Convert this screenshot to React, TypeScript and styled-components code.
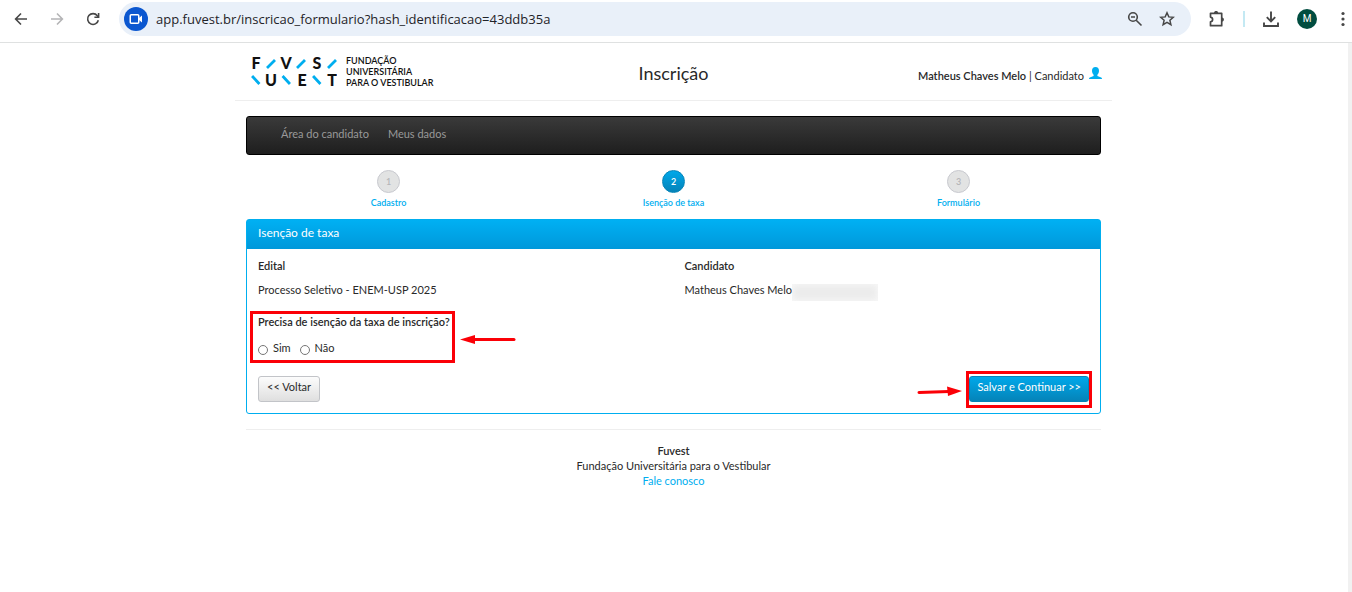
import React from "react";
import styled, { createGlobalStyle, css } from "styled-components";

const GlobalStyle = createGlobalStyle`
  *, *::before, *::after { box-sizing: border-box; }
  html, body { margin: 0; background: #fff; }
  body {
    font-family: Lato, "Liberation Sans", sans-serif;
    font-size: 11px;
    line-height: 16px;
    color: #292929;
  }
  button, input { font: inherit; color: inherit; }
  strong { font-weight: 600; }
`;

const Screen = styled.div`
  display: flex;
  flex-direction: column;
  min-height: 100vh;
`;

/* Browser bar */

const BrowserBar = styled.div`
  display: flex;
  align-items: center;
  height: 43px;
  padding: 0 0 4px 8px;
  border-bottom: 1px solid #dfe1e1;
  color: #474747;
`;

const BarButton = styled.button<{ $width?: number; $faded?: boolean }>`
  display: flex;
  flex: none;
  align-items: center;
  justify-content: center;
  width: ${(p) => p.$width ?? 36}px;
  height: 28px;
  padding: 0;
  border: 0;
  background: none;
  color: ${(p) => (p.$faded ? "#b4b4b6" : "#474747")};
`;

const MenuButton = styled(BarButton)`
  justify-content: flex-end;
  padding-right: 7px;
`;

const AddressBar = styled.div`
  display: flex;
  flex: 1;
  align-items: center;
  min-width: 0;
  height: 34px;
  margin-left: 13px;
  padding: 0 8px 0 5px;
  border-radius: 17px;
  background: #e9f0f9;
`;

const CameraBadge = styled.span`
  display: flex;
  flex: none;
  align-items: center;
  justify-content: center;
  width: 24px;
  height: 24px;
  border-radius: 50%;
  background: #0b57d0;
`;

const AddressInput = styled.input`
  flex: 1;
  min-width: 0;
  padding: 0 0 0 8px;
  border: 0;
  outline: 0;
  background: none;
  font-family: "Open Sans", "Noto Sans", sans-serif;
  font-size: 13px;
  line-height: 20px;
  color: #1f2328;
`;

const BarDivider = styled.span`
  width: 2px;
  height: 16px;
  background: #c4e9f3;
`;

const Avatar = styled.span`
  display: flex;
  align-items: center;
  justify-content: center;
  width: 20px;
  height: 20px;
  border-radius: 50%;
  background: #014d40;
  color: #fff;
  font-family: Roboto, sans-serif;
  font-size: 10px;
`;

/* Page */

const Viewport = styled.div`
  display: flex;
  flex: 1;
`;

const ScrollTrack = styled.div`
  width: 4px;
  background: #f1f1f1;
`;

const Page = styled.div`
  flex: 1;
  min-width: 0;
  padding-right: 1px;
`;

const Header = styled.header`
  display: grid;
  grid-template-columns: 1fr auto 1fr;
  align-items: center;
  max-width: 877px;
  height: 58px;
  margin: 0 auto;
  padding: 0 10px;
  border-bottom: 1px solid #eee;
`;

const LogoLink = styled.a`
  display: flex;
  gap: 9px;
  align-items: center;
  padding-left: 6px;
  color: #111;
  text-decoration: none;
`;

const LogoCaption = styled.span`
  font-size: 9px;
  font-weight: 600;
  line-height: 11px;
  white-space: nowrap;
`;

const Title = styled.h1`
  margin: 0;
  padding-top: 2px;
  font-size: 18px;
  font-weight: 400;
  line-height: 24px;
`;

const User = styled.div`
  display: flex;
  align-items: center;
  justify-content: flex-end;
  padding-top: 8px;

  svg { margin: 0 0 4px 5px; }
`;

const Container = styled.main`
  max-width: 855px;
  margin: 15px auto 0;
`;

const Nav = styled.nav`
  display: flex;
  gap: 19px;
  height: 39px;
  padding: 9px 34px;
  border: 1px solid #000;
  border-radius: 3px;
  background: linear-gradient(#3a3a3a, #1e1e1e);
`;

const NavLink = styled.a`
  color: #999;
  text-decoration: none;
`;

const Steps = styled.ol`
  display: grid;
  grid-template-columns: repeat(3, 1fr);
  margin: 0;
  padding: 15px 0 9px;
  list-style: none;
`;

const Step = styled.li`
  display: flex;
  flex-direction: column;
  align-items: center;
  gap: 3px;
  font-size: 9px;
  font-weight: 600;
  line-height: 14px;
  color: #00aeef;
`;

const StepNumber = styled.span<{ $active?: boolean }>`
  display: flex;
  align-items: center;
  justify-content: center;
  width: 23px;
  height: 23px;
  border: 1px solid #c8c9cf;
  border-radius: 50%;
  background: #e2e3e3;
  color: #b5b5b8;
  ${(p) =>
    p.$active &&
    css`
      border-color: #0584b8;
      background: linear-gradient(#00a8ea, #0583b8);
      color: #fff;
    `}
`;

const Panel = styled.section`
  border: 1px solid #00aeef;
  border-radius: 3px;
`;

const PanelHeading = styled.h2`
  margin: 0;
  padding: 5px 11px 8px;
  background: linear-gradient(#00b0f3, #0098da);
  color: #fff;
  font-size: 12px;
  font-weight: 400;
  line-height: 16px;
`;

const PanelForm = styled.form`
  display: flex;
  flex-direction: column;
  gap: 16px;
  padding: 9px 11px 11px;
`;

const FieldRow = styled.dl`
  display: grid;
  grid-template-columns: 1fr 1fr;
  column-gap: 22px;
  margin: 0;
`;

const FieldName = styled.dt`
  margin-bottom: 8px;
  font-weight: 600;
`;

const FieldValue = styled.dd`
  display: flex;
  margin: 0;
  white-space: nowrap;
`;

const Redacted = styled.span`
  width: 86px;
  height: 17px;
  margin: 2px 0 -3px;
  background: #ececec;
  box-shadow: inset 0 0 6px 1px #f8f8f8;
`;

const highlight = css`
  position: relative;

  &::after {
    content: "";
    position: absolute;
    border: 3px solid #fb0007;
    pointer-events: none;
  }
`;

const QuestionArea = styled.div`
  ${highlight}
  align-self: flex-start;

  &::after { inset: -3px -5px -7px -8px; }
`;

const Question = styled.fieldset`
  min-width: 0;
  margin: 0;
  padding: 0;
  border: 0;
`;

const Legend = styled.legend`
  padding: 0;
  font-weight: 600;
`;

const Options = styled.div`
  display: flex;
  gap: 9px;
  padding-top: 10px;
`;

const Option = styled.label`
  display: flex;
  gap: 5px;
`;

const Radio = styled.input`
  appearance: none;
  width: 10px;
  height: 10px;
  margin: 5px 0 0;
  border: 1px solid #767676;
  border-radius: 50%;
  background: #fff;

  &:checked { background: #00aeef; }
`;

const Actions = styled.div`
  display: flex;
  justify-content: space-between;
  padding-top: 4px;
`;

const SaveArea = styled.div`
  ${highlight}

  &::after { inset: -5px -3px -6px; }
`;

const Button = styled.button<{ $primary?: boolean }>`
  display: block;
  height: 26px;
  padding: 0 8px 4px;
  border: 1px solid #c2c4c8;
  border-radius: 3px;
  background: linear-gradient(#fcfcfc, #dfdfdf);
  font-size: 11px;
  line-height: 16px;
  white-space: nowrap;
  ${(p) =>
    p.$primary &&
    css`
      padding: 0 7px 4px;
      border-color: #0584b8;
      background: linear-gradient(#00a8ea, #0583b8);
      color: #fff;
    `}
`;

const Arrow = styled.svg<{ $side: "left" | "right" }>`
  position: absolute;
  ${(p) =>
    p.$side === "right"
      ? "left: calc(100% + 10px); top: 20px;"
      : "right: calc(100% + 6px); top: 9px;"}
`;

const Footer = styled.footer`
  margin-top: 15px;
  padding-top: 13px;
  border-top: 1px solid #eee;
  line-height: 15px;
  text-align: center;

  p { margin: 0; }
  a { color: #00aeef; text-decoration: none; }
`;

const Logo = () => (
  <svg width="86" height="42" viewBox="0 -6 86 42" aria-label="FUVEST" role="img">
    <g fontFamily="Lato" fontWeight="900" fontSize="16" fill="#111" textAnchor="middle">
      <text x="5" y="12">F</text>
      <text x="35" y="12">V</text>
      <text x="66" y="12">S</text>
      <text x="20" y="29">U</text>
      <text x="51" y="29">E</text>
      <text x="81" y="29">T</text>
    </g>
    <path
      d="M17 10l6-6M47 10l6-6M78 10l6-6M2 20l5.500 6M32.500 20l5.500 6M63 20l5.500 6"
      stroke="#00aeef"
      strokeWidth="2.800"
      strokeLinecap="square"
      fill="none"
    />
  </svg>
);

const App = () => (
  <Screen>
    <GlobalStyle />
    <BrowserBar>
      <BarButton $width={26} aria-label="Voltar">
        <svg width="14" height="14" viewBox="0 0 14 14" fill="none" stroke="currentColor" strokeWidth="1.6">
          <path d="M13 7H2M7 1.500L1.600 7 7 12.500" />
        </svg>
      </BarButton>
      <BarButton $width={46} $faded aria-label="Avançar">
        <svg width="14" height="14" viewBox="0 0 14 14" fill="none" stroke="currentColor" strokeWidth="1.6">
          <path d="M1 7h11M7 1.500L12.400 7 7 12.500" />
        </svg>
      </BarButton>
      <BarButton $width={26} aria-label="Recarregar">
        <svg width="14" height="14" viewBox="0 0 14 14" fill="none" stroke="currentColor" strokeWidth="1.6">
          <path d="M12.300 8.200A5.400 5.400 0 1 1 11.300 3.700L12.400 5" />
          <path d="M12.600 1v4.300H8.400" />
        </svg>
      </BarButton>
      <AddressBar>
        <CameraBadge>
          <svg width="14" height="12" viewBox="0 0 14 12" fill="none" stroke="#fff" strokeWidth="1.5">
            <rect x="1.250" y="1.750" width="8.500" height="8.500" rx="1" />
            <path d="M10 5l3-2.500v7L10 7z" fill="#fff" stroke="none" />
          </svg>
        </CameraBadge>
        <AddressInput
          aria-label="Endereço"
          defaultValue="app.fuvest.br/inscricao_formulario?hash_identificacao=43ddb35a"
        />
        <BarButton $width={32} aria-label="Zoom">
          <svg width="16" height="16" viewBox="0 0 16 16" fill="none" stroke="currentColor" strokeWidth="1.6">
            <circle cx="6" cy="6" r="4.300" />
            <path d="M9.200 9.200L14.500 14.500M4 6h4" />
          </svg>
        </BarButton>
        <BarButton $width={32} aria-label="Favoritar">
          <svg width="16" height="16" viewBox="0 0 16 16" fill="none" stroke="currentColor" strokeWidth="1.5">
            <path d="M8 1.800l1.800 4.100 4.500.4-3.400 3 1 4.400L8 11.400l-3.900 2.300 1-4.400-3.400-3 4.500-.4z" />
          </svg>
        </BarButton>
      </AddressBar>
      <BarButton $width={52} aria-label="Extensões">
        <svg width="18" height="18" viewBox="0 0 18 18" fill="none" stroke="currentColor" strokeWidth="1.7">
          <path
            d="M2.500 3.300h11.200v12.400H2.500v-3.800c2.800-.6 2.800-4.200 0-4.800z"
            strokeLinejoin="round"
          />
          <path d="M6 3c0-2.600 4.200-2.600 4.200 0zM14 7.400c2.600 0 2.600 4.200 0 4.200z" fill="currentColor" stroke="none" />
        </svg>
      </BarButton>
      <BarDivider />
      <BarButton $width={52} aria-label="Downloads">
        <svg width="18" height="18" viewBox="0 0 18 18" fill="none" stroke="currentColor" strokeWidth="1.900">
          <path d="M9 1.500v9.500M4.800 7.200L9 11.400l4.200-4.200M2 12.500V16h14v-3.500" />
        </svg>
      </BarButton>
      <BarButton $width={20} aria-label="Perfil">
        <Avatar>M</Avatar>
      </BarButton>
      <MenuButton $width={35} aria-label="Menu">
        <svg width="4" height="16" viewBox="0 0 4 16" fill="currentColor">
          <circle cx="2" cy="2.500" r="1.600" />
          <circle cx="2" cy="8" r="1.600" />
          <circle cx="2" cy="13.500" r="1.600" />
        </svg>
      </MenuButton>
    </BrowserBar>

    <Viewport>
      <Page>
        <Header>
          <LogoLink href="#">
            <Logo />
            <LogoCaption>
              FUNDAÇÃO
              <br />
              UNIVERSITÁRIA
              <br />
              PARA O VESTIBULAR
            </LogoCaption>
          </LogoLink>
          <Title>Inscrição</Title>
          <User>
            <span>
              <strong>Matheus Chaves Melo</strong> | Candidato
            </span>
            <svg width="13" height="13" viewBox="0 0 13 13" fill="#00aeef">
              <path d="M6.500 0C8.800 0 10 1.600 10 3.800c0 1.600-.7 3-1.600 3.900v1.200l3.800 1.700c.6.300.8.800.8 1.400H0c0-.6.200-1.100.8-1.400l3.800-1.700V7.700C3.700 6.800 3 5.400 3 3.800 3 1.600 4.200 0 6.500 0z" />
            </svg>
          </User>
        </Header>

        <Container>
          <Nav>
            <NavLink href="#">Área do candidato</NavLink>
            <NavLink href="#">Meus dados</NavLink>
          </Nav>

          <Steps>
            <Step>
              <StepNumber>1</StepNumber>
              Cadastro
            </Step>
            <Step aria-current="step">
              <StepNumber $active>2</StepNumber>
              Isenção de taxa
            </Step>
            <Step>
              <StepNumber>3</StepNumber>
              Formulário
            </Step>
          </Steps>

          <Panel>
            <PanelHeading>Isenção de taxa</PanelHeading>
            <PanelForm onSubmit={(e) => e.preventDefault()}>
              <FieldRow>
                <div>
                  <FieldName>Edital</FieldName>
                  <FieldValue>Processo Seletivo - ENEM-USP 2025</FieldValue>
                </div>
                <div>
                  <FieldName>Candidato</FieldName>
                  <FieldValue>
                    Matheus Chaves Melo
                    <Redacted />
                  </FieldValue>
                </div>
              </FieldRow>
              <QuestionArea>
                <Question>
                  <Legend>Precisa de isenção da taxa de inscrição?</Legend>
                  <Options>
                    <Option>
                      <Radio type="radio" name="isencao" value="sim" />
                      Sim
                    </Option>
                    <Option>
                      <Radio type="radio" name="isencao" value="nao" />
                      Não
                    </Option>
                  </Options>
                </Question>
                <Arrow $side="right" width="56" height="12" viewBox="0 0 56 12" aria-hidden="true">
                  <path d="M14 5.500h40" stroke="#fb0007" strokeWidth="3" strokeLinecap="round" />
                  <path d="M0 5.500L15 1v9z" fill="#fb0007" />
                </Arrow>
              </QuestionArea>
              <Actions>
                <Button type="button">&lt;&lt; Voltar</Button>
                <SaveArea>
                  <Button type="submit" $primary>
                    Salvar e Continuar &gt;&gt;
                  </Button>
                  <Arrow $side="left" width="46" height="12" viewBox="0 0 46 12" aria-hidden="true">
                    <path d="M2 7.500L32 6.500" stroke="#fb0007" strokeWidth="3" strokeLinecap="round" />
                    <path d="M30 1.500L45 6 31 11z" fill="#fb0007" />
                  </Arrow>
                </SaveArea>
              </Actions>
            </PanelForm>
          </Panel>

          <Footer>
            <p>
              <strong>Fuvest</strong>
            </p>
            <p>Fundação Universitária para o Vestibular</p>
            <p>
              <a href="#">Fale conosco</a>
            </p>
          </Footer>
        </Container>
      </Page>
      <ScrollTrack />
    </Viewport>
  </Screen>
);

export default App;
